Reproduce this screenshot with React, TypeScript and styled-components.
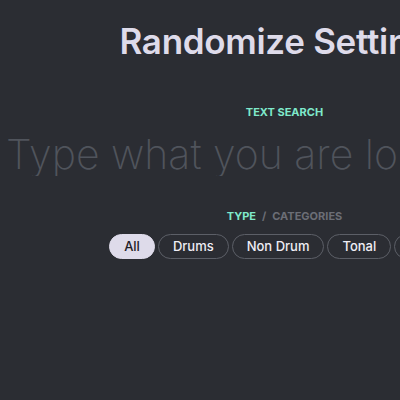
import React from "react";
import styled, { createGlobalStyle } from "styled-components";

const Global = createGlobalStyle`
  html, body {
    margin: 0;
    padding: 0;
    background: #2b2d33;
    overflow: hidden;
  }
  body {
    font-family: Inter, "Noto Sans", sans-serif;
  }
`;

const Page = styled.div`
  width: 569px;
  min-height: 400px;
  display: flex;
  flex-direction: column;
  align-items: center;
  background: #2b2d33;
`;

const Title = styled.h1`
  margin: 24px 0 0;
  font-size: 35px;
  line-height: 35px;
  font-weight: 600;
  letter-spacing: -0.3px;
  color: #dedbea;
  white-space: nowrap;
`;

const Label = styled.div<{ $top: number }>`
  margin-top: ${(p) => p.$top}px;
  font-size: 11px;
  line-height: 12px;
  font-weight: 700;
  letter-spacing: 0;
  text-transform: uppercase;
  display: flex;
  gap: 6px;
  white-space: nowrap;
`;

const LabelPart = styled.span<{ $active?: boolean }>`
  color: ${(p) => (p.$active ? "#7fe9cb" : "#6b6e76")};
`;

const SearchInput = styled.input`
  margin-top: 15px;
  width: 569px;
  box-sizing: border-box;
  padding: 0 0 0 6px;
  border: none;
  outline: none;
  background: transparent;
  font-family: Inter, sans-serif;
  font-size: 41px;
  line-height: 43px;
  height: 43px;
  font-weight: 200;
  color: #dedbea;
  &::placeholder {
    color: #50545c;
  }
`;

const PillRow = styled.div`
  margin-top: 12px;
  display: flex;
  gap: 3px;
  white-space: nowrap;
`;

const Pill = styled.button<{ $active?: boolean }>`
  height: 25px;
  box-sizing: border-box;
  padding: 0 14px;
  border-radius: 13px;
  border: 1px solid ${(p) => (p.$active ? "#dedbea" : "#5c5f67")};
  background: ${(p) => (p.$active ? "#dedbea" : "transparent")};
  color: ${(p) => (p.$active ? "#1f2026" : "#efedf5")};
  font-family: Inter, sans-serif;
  font-size: 13px;
  font-weight: 500;
  line-height: 23px;
  cursor: pointer;
`;

const categories = ["All", "Drums", "Non Drum", "Tonal", "Noise"];

export default function App() {
  return (
    <>
      <Global />
      <Page>
        <Title>Randomize Settings</Title>
        <Label $top={47}>
          <LabelPart $active>Text Search</LabelPart>
        </Label>
        <SearchInput placeholder="Type what you are looking for" />
        <Label $top={34}>
          <LabelPart $active>Type</LabelPart>
          <LabelPart>/</LabelPart>
          <LabelPart>Categories</LabelPart>
        </Label>
        <PillRow>
          {categories.map((c, i) => (
            <Pill key={c} $active={i === 0}>
              {c}
            </Pill>
          ))}
        </PillRow>
      </Page>
    </>
  );
}
